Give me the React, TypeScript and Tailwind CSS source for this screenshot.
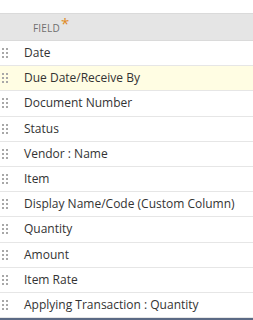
const fields = [
  'Date',
  'Due Date/Receive By',
  'Document Number',
  'Status',
  'Vendor : Name',
  'Item',
  'Display Name/Code (Custom Column)',
  'Quantity',
  'Amount',
  'Item Rate',
  'Applying Transaction : Quantity',
];

function Grip() {
  return (
    <svg width="6" height="10" viewBox="0 0 6 10" className="shrink-0">
      {[0, 4, 8].map(y => (
        <g key={y} fill="#a8a8a8">
          <rect x="0" y={y} width="2" height="2" />
          <rect x="4" y={y} width="2" height="2" />
        </g>
      ))}
    </svg>
  );
}

export default function App() {
  return (
    <div className="w-[253px] h-[320px] bg-white overflow-hidden pt-[13px] font-['Open_Sans',sans-serif]">
      {/* header */}
      <div className="h-[28px] bg-[#e5e5e5] border-y border-[#dadada] flex items-center pl-[33px] pt-[3px]">
        <span className="text-[10px] uppercase text-[#6f6f6f] tracking-[0.2px]">Field</span>
        <span className="text-[15px] text-[#e08a1e] leading-none ml-[1px] -mt-[10px]">*</span>
      </div>

      {/* rows */}
      {fields.map((f, i) => (
        <div
          key={f}
          className={`h-[25.2px] flex items-center border-b border-[#e6e6e6] pl-[2px] ${
            i === 1 ? 'bg-[#fffde3]' : 'bg-white'
          }`}
        >
          <Grip />
          <span className="ml-[16px] text-[12px] text-[#333] whitespace-nowrap">{f}</span>
        </div>
      ))}
      <div className="h-[3px] bg-[#5b6a85]" />
    </div>
  );
}
